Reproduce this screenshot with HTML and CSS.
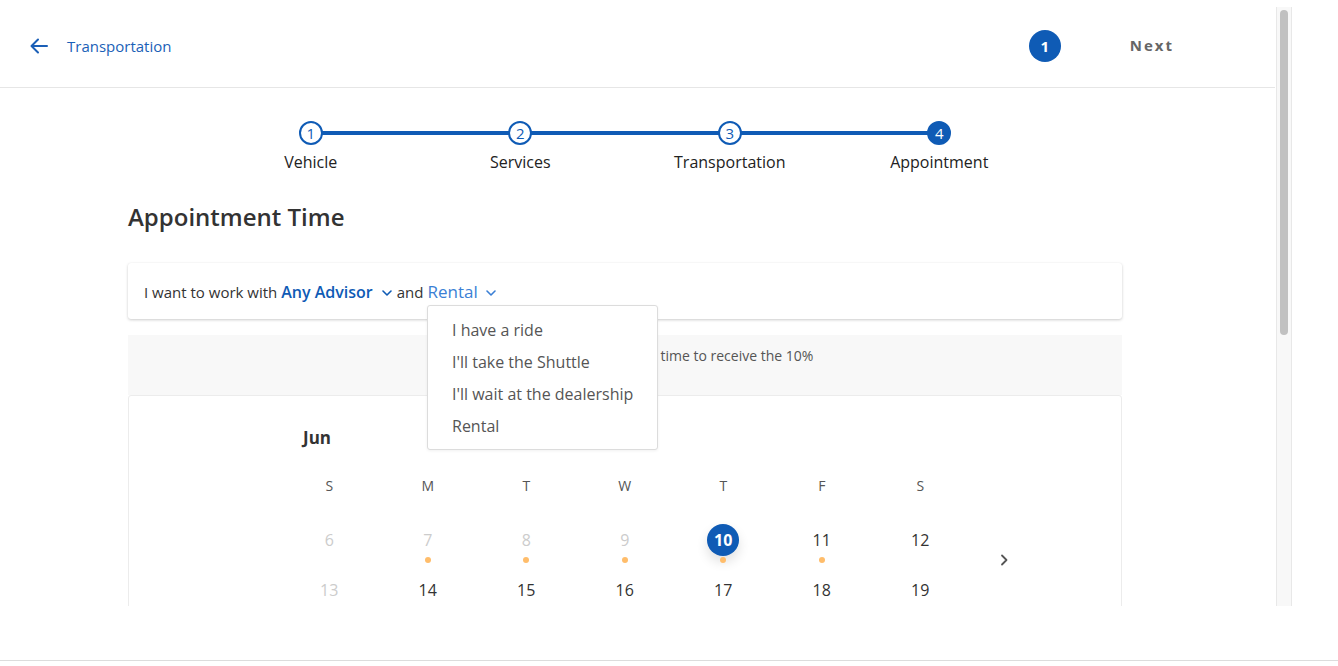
FILE: index.html
```html
<!DOCTYPE html>
<html lang="en">
<head>
<meta charset="utf-8">
<title>Appointment</title>
<link rel="stylesheet" href="styles.css">
</head>
<body>
<div class="frame">
  <div class="viewport">
    <header class="topbar">
      <a class="back" href="#">
        <svg class="back-icon" width="18" height="16" viewBox="0 0 18 16" fill="none" stroke="currentColor" stroke-width="2" stroke-linecap="round" stroke-linejoin="round"><path d="M17 8H2"/><path d="M8 1.5L1.5 8L8 14.5"/></svg>
        <span>Transportation</span>
      </a>
      <div class="top-actions">
        <span class="badge">1</span>
        <span class="next">Next</span>
      </div>
    </header>

    <main class="main">
      <ol class="stepper">
        <li class="step"><span class="dot">1</span><span class="label">Vehicle</span></li>
        <li class="step"><span class="dot">2</span><span class="label">Services</span></li>
        <li class="step"><span class="dot">3</span><span class="label">Transportation</span></li>
        <li class="step active"><span class="dot">4</span><span class="label">Appointment</span></li>
      </ol>

      <h1 class="title">Appointment Time</h1>

      <div class="prefs">
        <span>I want to work with</span>
        <span class="pick strong">Any Advisor</span>
        <svg class="chev" width="10" height="6" viewBox="0 0 10 6" fill="none" stroke="currentColor" stroke-width="1.6" stroke-linecap="round" stroke-linejoin="round"><path d="M1 1l4 4 4-4"/></svg>
        <span>and</span>
        <span class="pick light">Rental</span>
        <svg class="chev light" width="10" height="6" viewBox="0 0 10 6" fill="none" stroke="currentColor" stroke-width="1.6" stroke-linecap="round" stroke-linejoin="round"><path d="M1 1l4 4 4-4"/></svg>

        <ul class="menu">
          <li>I have a ride</li>
          <li>I'll take the Shuttle</li>
          <li>I'll wait at the dealership</li>
          <li>Rental</li>
        </ul>
      </div>

      <div class="notice">Select a highlighted appointment time to receive the 10%</div>

      <section class="calendar">
        <div class="month">Jun</div>
        <div class="cal-body">
          <div class="grid">
            <span class="dow">S</span><span class="dow">M</span><span class="dow">T</span><span class="dow">W</span><span class="dow">T</span><span class="dow">F</span><span class="dow">S</span>

            <span class="day off">6</span>
            <span class="day off deal">7</span>
            <span class="day off deal">8</span>
            <span class="day off deal">9</span>
            <span class="day sel deal"><b>10</b></span>
            <span class="day deal">11</span>
            <span class="day">12</span>

            <span class="day off">13</span>
            <span class="day">14</span>
            <span class="day">15</span>
            <span class="day">16</span>
            <span class="day">17</span>
            <span class="day">18</span>
            <span class="day">19</span>
          </div>
          <svg class="next-week" width="8" height="12" viewBox="0 0 8 12" fill="none" stroke="currentColor" stroke-width="1.8" stroke-linecap="round" stroke-linejoin="round"><path d="M2 1.5l4.5 4.5L2 10.5"/></svg>
        </div>
      </section>
    </main>
  </div>
  <div class="scrolltrack"><div class="thumb"></div></div>
</div>
<footer class="footer"></footer>
</body>
</html>
```

FILE: styles.css
```css
* { box-sizing: border-box; }

html, body {
  margin: 0;
  padding: 0;
  background: #fff;
  font-family: "Open Sans", "Noto Sans", sans-serif;
  color: #333;
}

.frame {
  display: flex;
  height: 606px;
  width: 1292px;
}

.viewport {
  width: 1276px;
  height: 606px;
  overflow: hidden;
}

.scrolltrack {
  width: 16px;
  margin-top: 7px;
  height: 599px;
  background: #f8f8f8;
  border-left: 1px solid #e8e8e8;
  border-right: 1px solid #e8e8e8;
  padding: 3px 3px 0 3px;
}

.thumb {
  width: 8px;
  height: 325px;
  background: #c1c1c1;
  border-radius: 4px;
}

.footer {
  margin-top: 54px;
  border-top: 1px solid #dcdcdc;
  height: 6px;
}

/* header */
.topbar {
  height: 88px;
  border-bottom: 1px solid #e6e6e6;
  width: 1275px;
  display: flex;
  align-items: center;
  justify-content: space-between;
  padding: 5px 101px 0 30px;
}

.back {
  display: flex;
  align-items: center;
  gap: 19px;
  color: #1b5fb7;
  text-decoration: none;
  font-size: 15px;
}

.back-icon { display: block; }

.top-actions {
  display: flex;
  align-items: center;
  gap: 69px;
}

.badge {
  width: 32px;
  height: 32px;
  border-radius: 50%;
  background: #0f5bb5;
  color: #fff;
  font-weight: 700;
  font-size: 15px;
  display: flex;
  align-items: center;
  justify-content: center;
}

.next {
  font-weight: 700;
  font-size: 15px;
  letter-spacing: 2px;
  color: #666;
  margin-bottom: 2px;
}

/* main column */
.main {
  margin-left: 128px;
  width: 994px;
}

.stepper {
  list-style: none;
  margin: 33px auto 0;
  padding: 0;
  width: 838px;
  display: grid;
  grid-template-columns: repeat(4, 1fr);
  position: relative;
}

.stepper::before {
  content: "";
  position: absolute;
  left: 105px;
  right: 105px;
  top: 10px;
  height: 4px;
  background: #0f5bb5;
}

.step {
  display: flex;
  flex-direction: column;
  align-items: center;
  position: relative;
}

.dot {
  width: 24px;
  height: 24px;
  border-radius: 50%;
  border: 2px solid #0f5bb5;
  background: #fff;
  color: #0f5bb5;
  font-size: 15px;
  line-height: 20px;
  text-align: center;
}

.step.active .dot {
  background: #0f5bb5;
  color: #fff;
}

.label {
  margin-top: 6px;
  font-size: 16px;
  line-height: 22px;
  color: #222;
}

.title {
  margin: 28px 0 0;
  font-size: 24px;
  line-height: 32px;
  font-weight: 600;
  color: #333;
}

.prefs {
  margin-top: 30px;
  height: 56px;
  background: #fff;
  border-radius: 3px;
  box-shadow: 0 1px 3px rgba(0, 0, 0, 0.2), 0 0 1px rgba(0, 0, 0, 0.06);
  display: flex;
  align-items: center;
  padding: 1px 16px 0 16px;
  font-size: 15px;
  color: #333;
  position: relative;
  z-index: 2;
}

.prefs > span { margin-right: 4px; }

.pick {
  font-size: 16px;
  margin-left: 0;
}

.pick.strong {
  color: #0f5bb5;
  font-weight: 600;
  margin-right: 9px !important;
}

.pick.light {
  font-size: 17px;
  color: #3a7fd5;
  margin-right: 8px !important;
}

.chev {
  color: #0f5bb5;
  margin-right: 5px;
  margin-top: 2px;
}

.chev.light { color: #3a7fd5; }

.menu {
  position: absolute;
  left: 299px;
  top: 42px;
  width: 231px;
  margin: 0;
  padding: 8px 0 7px;
  list-style: none;
  background: #fff;
  border: 1px solid #dcdcdc;
  border-radius: 3px;
  box-shadow: 0 1px 3px rgba(0, 0, 0, 0.06);
}

.menu li {
  padding: 0 24px;
  height: 32px;
  line-height: 32px;
  font-size: 16px;
  color: #555;
  white-space: nowrap;
}

.notice {
  margin-top: 16px;
  height: 60px;
  background: #f8f8f8;
  text-align: center;
  padding: 11px 0 0 5px;
  font-size: 14px;
  color: #555;
  line-height: 20px;
}

.calendar {
  background: #fff;
  border: 1px solid #ececec;
  border-radius: 3px;
  height: 230px;
  padding: 30px 0 0 151px;
}

.month {
  padding-left: 23px;
  font-size: 17px;
  font-weight: 700;
  color: #333;
  line-height: 24px;
}

.cal-body {
  display: flex;
  align-items: flex-start;
}

.grid {
  margin-top: 26px;
  display: grid;
  grid-template-columns: repeat(7, 98.5px);
  grid-template-rows: 20px 60px 50px;
}

.dow {
  text-align: center;
  font-size: 14px;
  color: #555;
  line-height: 20px;
}

.day {
  position: relative;
  display: flex;
  align-items: center;
  justify-content: center;
  font-size: 16px;
  color: #333;
  height: 32px;
  align-self: end;
}

.day.off { color: #ccc; }

.day.deal::after {
  content: "";
  position: absolute;
  left: 50%;
  top: 33px;
  width: 6px;
  height: 6px;
  margin-left: -3px;
  border-radius: 50%;
  background: #ffbd6b;
}

.day.sel b {
  width: 32px;
  height: 32px;
  border-radius: 50%;
  background: #0f5bb5;
  color: #fff;
  font-weight: 700;
  font-size: 16px;
  display: flex;
  align-items: center;
  justify-content: center;
  box-shadow: 0 6px 12px rgba(0, 0, 0, 0.12);
}

.next-week {
  color: #555;
  margin-left: 30px;
  margin-top: 104px;
}
```
